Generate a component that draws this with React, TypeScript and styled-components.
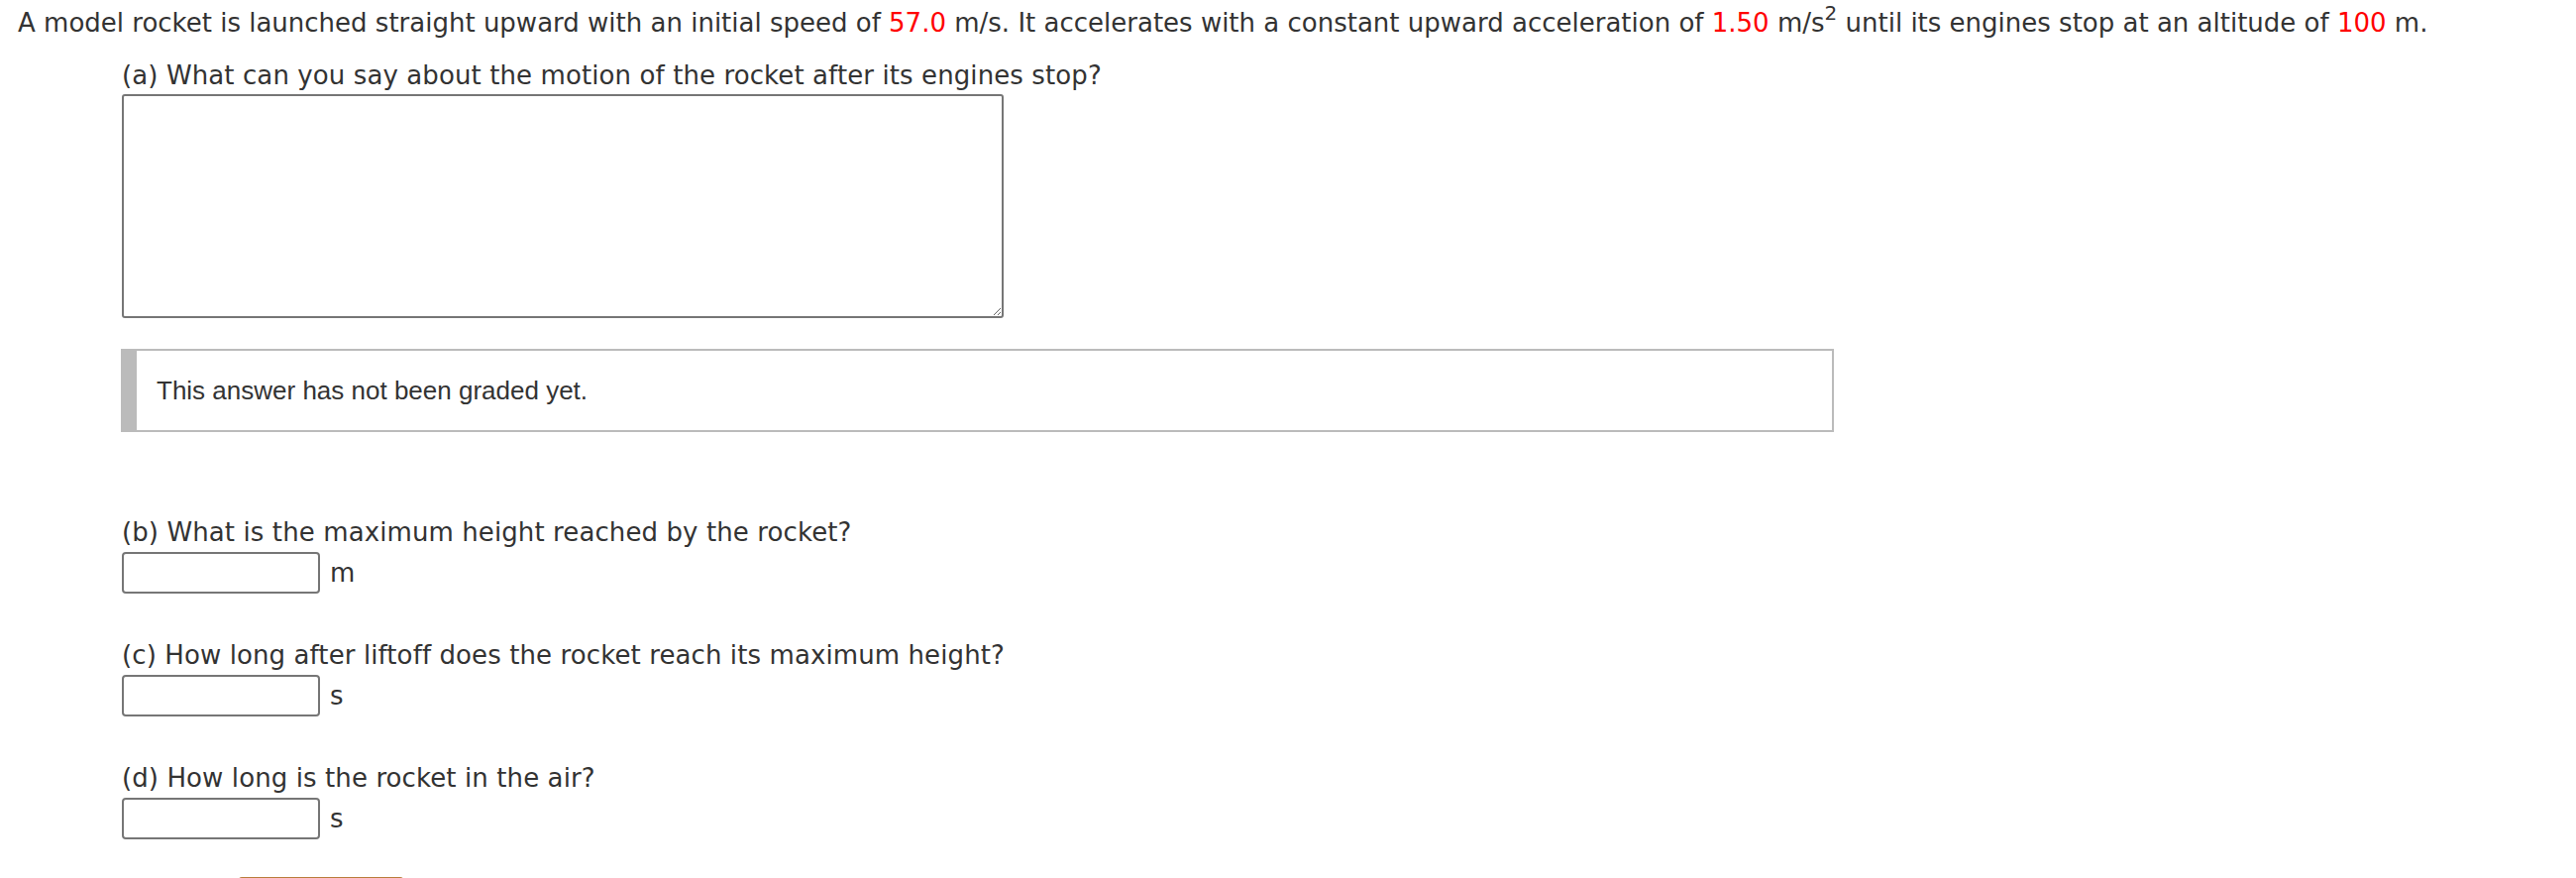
import styled, { createGlobalStyle } from "styled-components";

const GlobalStyle = createGlobalStyle`
  body {
    margin: 0;
    background: #ffffff;
    font-family: "DejaVu Sans", Verdana, sans-serif;
    font-size: 26px;
    color: #333333;
  }
`;

const Page = styled.div`
  padding: 4px 0 0 18px;
`;

const Prompt = styled.div`
  line-height: 38px;
  white-space: nowrap;
`;

const Value = styled.span`
  color: #ff0000;
`;

const Sup = styled.sup`
  font-size: 20px;
  line-height: 0;
  vertical-align: 12px;
`;

const Parts = styled.div`
  margin-left: 105px;
  display: flex;
  flex-direction: column;
`;

const Part = styled.div<{ $top: number }>`
  margin-top: ${(p) => p.$top}px;
  display: flex;
  flex-direction: column;
  align-items: flex-start;
`;

const Label = styled.div`
  line-height: 38px;
  letter-spacing: 0.1px;
`;

const AnswerArea = styled.textarea`
  display: block;
  box-sizing: border-box;
  width: 890px;
  height: 226px;
  margin: 0;
  border: 2px solid #767676;
  border-radius: 3px;
  background: #ffffff;
  font: inherit;
`;

const GradeBox = styled.div`
  box-sizing: border-box;
  width: 1729px;
  height: 84px;
  margin: 31px 0 0 -1px;
  border: 2px solid #bbbbbb;
  border-left: 16px solid #bbbbbb;
  display: flex;
  align-items: center;
  padding-left: 20px;
  font-family: "Liberation Sans", Arial, sans-serif;
  font-size: 26px;
  color: #333333;
`;

const InputRow = styled.div`
  display: flex;
  align-items: center;
  gap: 10px;
  margin-top: 1px;
`;

const NumberInput = styled.input`
  box-sizing: border-box;
  width: 200px;
  height: 42px;
  margin: 0;
  border: 2px solid #767676;
  border-radius: 4px;
  background: #ffffff;
  font: inherit;
`;

const Unit = styled.span`
  line-height: 38px;
`;

const SubmitButton = styled.button`
  box-sizing: border-box;
  width: 166px;
  height: 52px;
  margin: 38px 0 0 118px;
  border: 2px solid #b97d3c;
  border-radius: 3px;
  background: #fbe3c6;
`;

const questions = [
  { label: "(b) What is the maximum height reached by the rocket?", unit: "m", top: 82 },
  { label: "(c) How long after liftoff does the rocket reach its maximum height?", unit: "s", top: 43 },
  { label: "(d) How long is the rocket in the air?", unit: "s", top: 43 },
];

export default function App() {
  return (
    <>
      <GlobalStyle />
      <Page>
        <Prompt>
          A model rocket is launched straight upward with an initial speed of <Value>57.0</Value> m/s. It
          accelerates with a constant upward acceleration of <Value>1.50</Value> m/s<Sup>2</Sup> until its
          engines stop at an altitude of <Value>100</Value> m.
        </Prompt>
        <Parts>
          <Part $top={15}>
            <Label>(a) What can you say about the motion of the rocket after its engines stop?</Label>
            <AnswerArea />
            <GradeBox>This answer has not been graded yet.</GradeBox>
          </Part>
          {questions.map((q) => (
            <Part key={q.label} $top={q.top}>
              <Label>{q.label}</Label>
              <InputRow>
                <NumberInput type="text" />
                <Unit>{q.unit}</Unit>
              </InputRow>
            </Part>
          ))}
          <Part $top={0}>
            <SubmitButton type="button" aria-label="Submit" />
          </Part>
        </Parts>
      </Page>
    </>
  );
}
